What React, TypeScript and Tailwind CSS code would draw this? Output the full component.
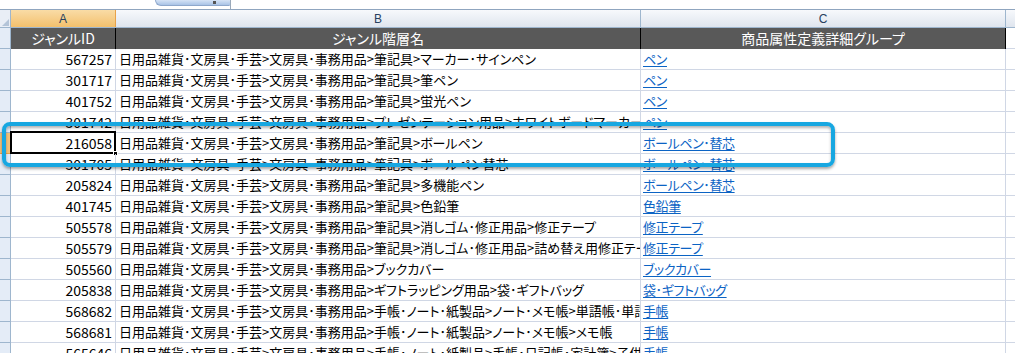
import React from "react";

const prefix = "日用品雑貨･文房具･手芸>文房具･事務用品>";

const rows: [string, string, string][] = [
  ["567257", "筆記具>マーカー･サインペン", "ペン"],
  ["301717", "筆記具>筆ペン", "ペン"],
  ["401752", "筆記具>蛍光ペン", "ペン"],
  ["301742", "プレゼンテーション用品>ホワイトボードマーカー", "ペン"],
  ["216058", "筆記具>ボールペン", "ボールペン･替芯"],
  ["301705", "筆記具>ボールペン替芯", "ボールペン･替芯"],
  ["205824", "筆記具>多機能ペン", "ボールペン･替芯"],
  ["401745", "筆記具>色鉛筆", "色鉛筆"],
  ["505578", "筆記具>消しゴム･修正用品>修正テープ", "修正テープ"],
  ["505579", "筆記具>消しゴム･修正用品>詰め替え用修正テープ", "修正テープ"],
  ["505560", "ブックカバー", "ブックカバー"],
  ["205838", "ギフトラッピング用品>袋･ギフトバッグ", "袋･ギフトバッグ"],
  ["568682", "手帳･ノート･紙製品>ノート･メモ帳>単語帳･単語カード", "手帳"],
  ["568681", "手帳･ノート･紙製品>ノート･メモ帳>メモ帳", "手帳"],
  ["565646", "手帳･ノート･紙製品>手帳･日記帳･家計簿>子供用手帳", "手帳"],
];

export default function App() {
  return (
    <div
      className="relative w-[1015px] h-[353px] overflow-hidden bg-white text-black [font-family:'Noto_Sans_CJK_JP','Noto_Sans',sans-serif] [font-feature-settings:'palt']"
    >
      {/* formula bar remnant */}
      <div className="flex h-[10px] border-b border-[#8fa5bf] bg-white overflow-hidden">
        <div className="w-[43px]" />
        <div className="w-[40px] h-[9px] overflow-hidden">
          <div className="-mt-[12px] text-[13px] leading-[14px] text-[#333] [font-family:'Liberation_Sans',sans-serif]">A6</div>
        </div>
        <div className="w-[72px]" />
        <div className="w-[75px] h-[6px] rounded-bl-[14px] rounded-br-[3px] border-b border-l border-[#8ea8cc] bg-gradient-to-b from-[#d5e3f5] to-[#a9c3e6] flex justify-end pr-[14px]">
          <div className="w-[3px] h-[3px] mt-[1px] bg-[#555]" />
        </div>
        <div className="w-[1px] h-[9px] bg-[#9aa9ba]" />
        <div className="w-[70px] h-[9px] overflow-hidden pl-[6px]">
          <div className="-mt-[12px] text-[14px] leading-[14px] text-[#222] [font-family:'Liberation_Sans',sans-serif]">216058</div>
        </div>
      </div>

      {/* column header strip */}
      <div className="flex h-[18px] border-b border-[#9eb6ce] bg-gradient-to-b from-[#f7f9fc] to-[#dfe5ee] text-[12px] text-[#27415f] [font-family:'Liberation_Sans',sans-serif]">
        <div className="w-[11px] border-r border-[#9eb6ce] bg-[#e9eef6] relative overflow-hidden">
          <div className="absolute right-[1px] bottom-[1px] w-0 h-0 border-l-[7px] border-l-transparent border-b-[7px] border-b-[#b4c4d8]" />
        </div>
        <div className="w-[105px] border-r border-[#e8a24a] bg-gradient-to-b from-[#f9dca6] to-[#f3c06c] flex items-center justify-center">A</div>
        <div className="w-[525px] border-r border-[#9eb6ce] flex items-center justify-center">B</div>
        <div className="w-[365px] border-r border-[#9eb6ce] flex items-center justify-center">C</div>
        <div className="flex-1" />
      </div>

      {/* header row 1 */}
      <div className="flex h-[21px] text-[14px] text-white">
        <div className="w-[11px] border-r border-b border-[#9eb6ce] bg-[#e4ecf7]" />
        <div className="w-[105px] border-r border-black bg-[#595959] flex items-center justify-center">ジャンルID</div>
        <div className="w-[525px] border-r border-black bg-[#595959] flex items-center justify-center">ジャンル階層名</div>
        <div className="w-[365px] border-r border-black bg-[#595959] flex items-center justify-center">商品属性定義詳細グループ</div>
        <div className="flex-1 border-b border-[#d0d7e5]" />
      </div>

      {/* data rows */}
      {rows.map(([id, tail, group]) => {
        const sel = id === "216058";
        return (
          <div key={id} className="flex h-[21px] leading-[20px]">
            <div
              className={
                sel
                  ? "w-[11px] border-r border-b border-[#e8a24a] bg-[#f3c27b]"
                  : "w-[11px] border-r border-b border-[#9eb6ce] bg-[#e4ecf7]"
              }
            />
            <div className="relative w-[105px] border-r border-b border-[#d0d7e5] flex items-center justify-end pr-[3px] text-[14px]">
              {id}
              {sel && (
                <>
                  <div className="absolute -left-[1px] -top-[2px] -right-[1px] -bottom-[1px] border-2 border-black" />
                  <div className="absolute -right-[3px] -bottom-[3px] w-[5px] h-[5px] bg-black border border-white" />
                </>
              )}
            </div>
            <div className="w-[525px] border-r border-b border-[#d0d7e5] flex items-center pl-[3px] overflow-hidden whitespace-nowrap text-[13px]">
              {prefix + tail}
            </div>
            <div className="w-[365px] border-r border-b border-[#d0d7e5] flex items-center pl-[2px] overflow-hidden whitespace-nowrap text-[13px] tracking-[-0.4px]">
              <span className="text-[#0b63c4] underline underline-offset-[2px]">{group}</span>
            </div>
            <div className="flex-1 border-b border-[#d0d7e5]" />
          </div>
        );
      })}

      {/* highlight annotation */}
      <div className="absolute left-[2px] top-[122px] w-[833px] h-[45px] rounded-[8px] border-[4px] border-[#17a7e1] shadow-[0_2px_3px_rgba(0,0,0,0.35),inset_0_2px_3px_rgba(0,0,0,0.3)]" />
    </div>
  );
}
